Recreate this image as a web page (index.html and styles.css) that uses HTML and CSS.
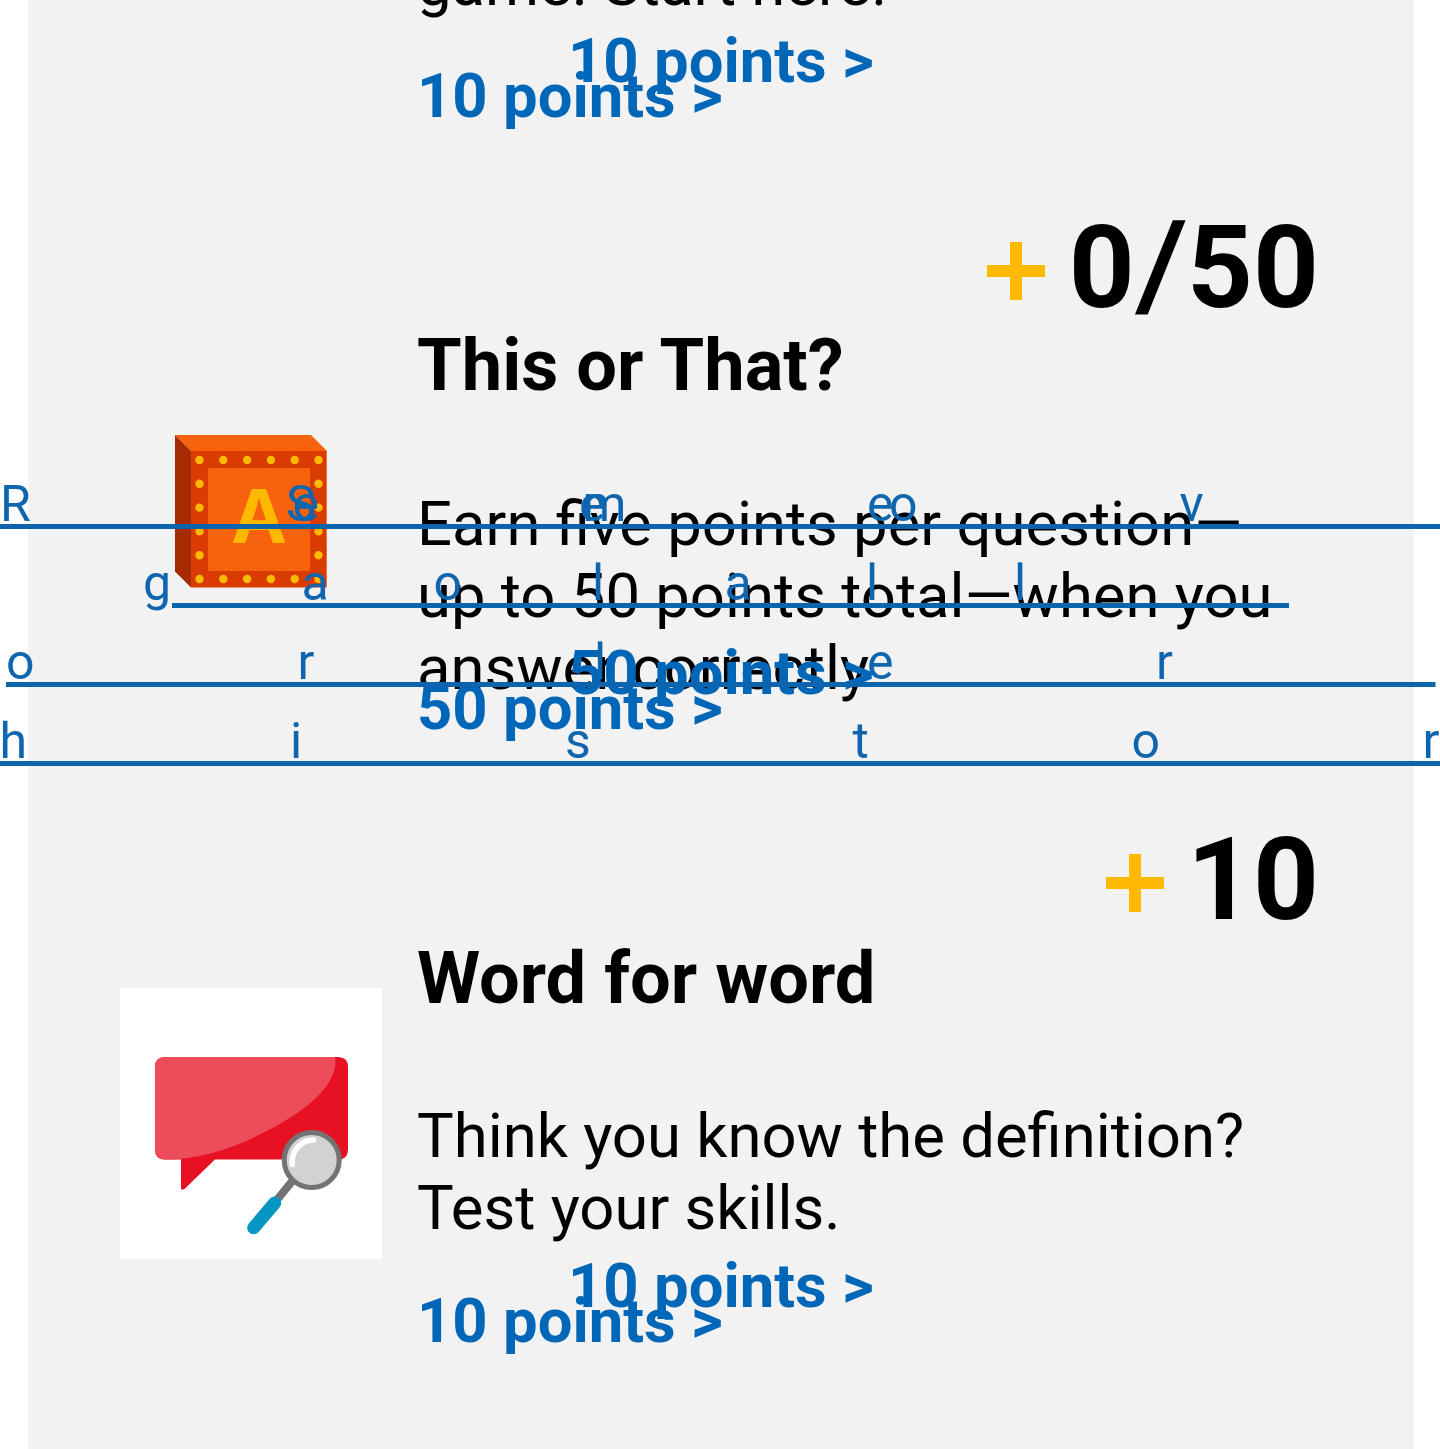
FILE: index.html
```html
<!DOCTYPE html>
<html lang="en">
<head>
<meta charset="utf-8">
<title>Rewards</title>
<link rel="stylesheet" href="styles.css">
</head>
<body>
<main class="feed">
  <article class="card card-first">
    <div class="card-icon"></div>
    <div class="card-content">
      <p class="description">game. Start here!</p>
      <div class="links"><a class="link">10 points &gt;</a><a class="link link-over">10 points &gt;</a></div>
    </div>
  </article>
  <article class="card">
    <svg class="card-icon" viewBox="0 0 262 271">
      <path fill="#f7630c" d="M55 59H191L207 75H71Z"/>
      <path fill="#a52c00" d="M55 59L71 75V211.5L55 195.5Z"/>
      <path fill="#da3b01" d="M71 75H206.7V211.5H71Z"/>
      <path fill="#f7630c" d="M88 92H190V195H88Z"/>
      <g fill="none" stroke="#ffb900" stroke-width="8.4" stroke-linecap="round" stroke-dasharray="0 23.8">
        <path d="M79.5 84H198.8M79.5 203H198.8M79.5 107.8V180M198.5 107.8V180"/>
      </g>
      <text class="block-letter" x="139" y="167" text-anchor="middle">A</text>
    </svg>
    <div class="card-content">
      <div class="score"><svg class="plus" viewBox="0 0 58 58"><path d="M23 0H35V23H58V35H35V58H23V35H0V23H23Z"/></svg><span>0<span class="slash">/</span>50</span></div>
      <h2 class="title">This or That?</h2>
      <p class="description">Earn five points per question—<br>up to 50 points total—when you<br>answer correctly</p>
      <div class="links"><a class="link">50 points &gt;</a><a class="link link-over">50 points &gt;</a></div>
    </div>
  </article>
  <article class="card card-last">
    <svg class="card-icon card-icon-white" viewBox="0 0 262 271">
      <path fill="#e81123" d="M45 69H218Q228 69 228 79V161.500Q228 171.500 218 171.500H95L64.500 201Q61 203 61 200V171.500H45Q35 171.500 35 161.500V79Q35 69 45 69Z"/>
      <path fill="#ed4d5b" d="M45 69H215C219 91 196 115 163 134C124 157 84 171.500 45 171.500Q35 171.500 35 161.500V79Q35 69 45 69Z"/>
      <path stroke="#737373" stroke-width="8" d="M174 191L156 213"/>
      <path stroke="#0596c4" stroke-width="13" stroke-linecap="round" d="M154.700 215L133.700 239.700"/>
      <circle cx="191.700" cy="172" r="27.500" fill="#d2d2d2" stroke="#737373" stroke-width="5"/>
      <path fill="none" stroke="#fff" stroke-width="5.500" stroke-linecap="round" d="M172.300 176.500C171 164 180 152 193.500 152"/>
    </svg>
    <div class="card-content">
      <div class="score"><svg class="plus" viewBox="0 0 58 58"><path d="M23 0H35V23H58V35H35V58H23V35H0V23H23Z"/></svg><span>10</span></div>
      <h2 class="title">Word for word</h2>
      <p class="description">Think you know the definition?<br>Test your skills.</p>
      <div class="links"><a class="link">10 points &gt;</a><a class="link link-over">10 points &gt;</a></div>
    </div>
  </article>
</main>
<svg class="history" viewBox="0 0 1440 1449">
  <text y="521" x="0 292.500 579 867">Reee</text>
  <text y="521" x="286 582.500 889 1179.500">Smov</text>
  <text y="600" x="143 301.500 433.500 592 724.500 866 1014">gaolall</text>
  <text y="679" x="6 297.500 594 867 1156">orler</text>
  <text y="758" x="-0.5 290 565 852.500 1131.500 1422.500">histor</text>
  <path d="M0 526.500H1440M172 605.500H1289M6 684.500H1435.500M0 763.500H1440"/>
</svg>
</body>
</html>
```
FILE: styles.css
```css
body {
  position: relative;
  margin: 0;
  height: 1449px;
  overflow: hidden;
  background: #fff;
  color: #000;
  font-family: Roboto, "Liberation Sans", sans-serif;
}

.feed {
  height: 1449px;
  margin: 0 26px 0 28px;
  background: #f2f2f2;
}

.card {
  display: grid;
  grid-template-columns: 262px 1fr;
  column-gap: 35px;
  height: 612px;
  padding: 0 95px 0 92px;
  box-sizing: border-box;
}

.card-first {
  height: 152px;
}

.card-first .description {
  height: 72px;
  margin-top: -52px;
}

.card-icon {
  width: 262px;
  height: 271px;
  margin-top: 224px;
}

.card-first .card-icon {
  height: 0;
  margin: 0;
}

.card-icon-white {
  background: #fff;
}

.block-letter {
  fill: #ffb900;
  font: bold 76px "Noto Sans", sans-serif;
}

.score {
  display: flex;
  justify-content: flex-end;
  align-items: center;
  gap: 23.5px;
  height: 120px;
  margin-top: 56px;
  font-size: 115px;
  font-weight: 700;
  font-kerning: none;
  line-height: 120px;
}

.slash {
  display: inline-block;
  margin: 0 3px 0 4px;
  font-size: 122px;
  line-height: 100px;
  transform: skewX(-3.7deg);
}

.plus {
  width: 58px;
  height: 58px;
  margin-top: 6px;
  fill: #ffb900;
}

.title {
  margin: 1px 0 -1px;
  font-size: 72.2px;
  font-weight: 700;
  line-height: 74px;
  white-space: nowrap;
}

.card-last .title {
  margin: 2px 0 -2px;
}

.description {
  height: 144px;
  margin: 86px 0 0;
  font-size: 61.6px;
  line-height: 72px;
  white-space: nowrap;
}

.links {
  position: relative;
  margin-top: 40px;
}

.card-last .links {
  margin-top: 41px;
}

.link {
  display: block;
  color: #0067b8;
  font-size: 61.6px;
  font-weight: 700;
  line-height: 72px;
  white-space: nowrap;
}

.link-over {
  position: absolute;
  top: -35px;
  left: 151px;
}

.history {
  position: absolute;
  top: 0;
  left: 0;
  width: 1440px;
  height: 1449px;
  fill: #0f66ae;
  font-size: 50px;
}

.history path {
  stroke: #0c65ac;
  stroke-width: 5px;
}
```
